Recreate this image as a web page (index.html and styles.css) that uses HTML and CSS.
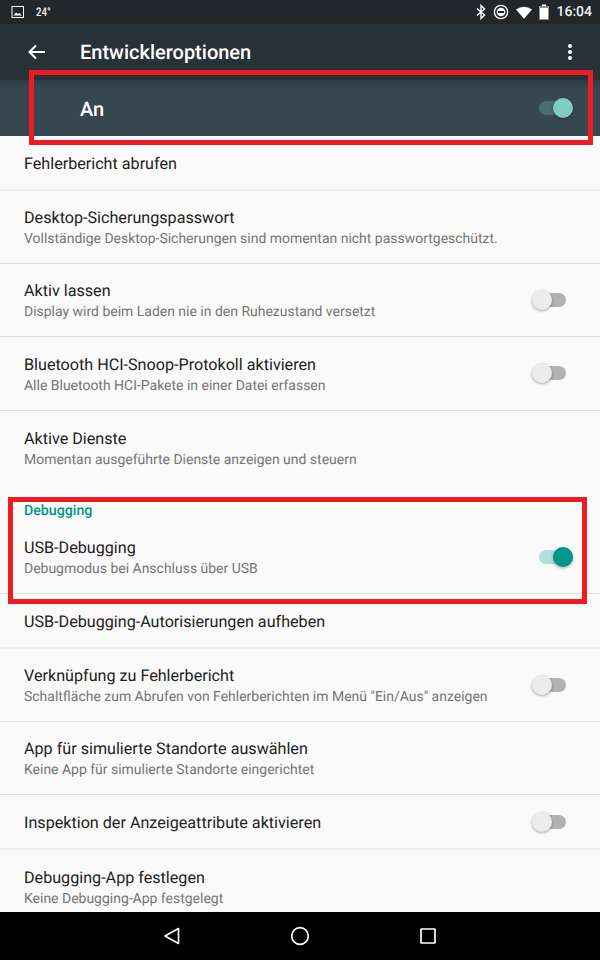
FILE: index.html
```html
<!DOCTYPE html>
<html lang="de">
<head>
    <meta charset="UTF-8">
    <meta name="viewport" content="width=device-width, initial-scale=1.0">
    <title>Entwickleroptionen</title>
    <link rel="stylesheet" href="styles.css">
</head>
<body>
    <div class="screen">
        <div class="status-bar">
            <div class="status-left">
                <svg class="pic-icon" width="14" height="14" viewBox="0 0 14 14"><rect x="1" y="1.5" width="11.5" height="11" fill="none" stroke="#fff" stroke-width="1"/><path d="M2.5 10.5 L5 7.5 L7 9 L8.5 8 L11 10.5 Z" fill="#fff"/></svg>
                <span class="temp">24°</span>
            </div>
            <div class="status-right">
                <svg width="10" height="16" viewBox="0 0 10 16"><path d="M1 4.5 L8.5 11 L5 14.5 V1.5 L8.5 5 L1 11.5" fill="none" stroke="#fff" stroke-width="1.4"/></svg>
                <svg width="16" height="16" viewBox="0 0 16 16"><circle cx="8" cy="8" r="6.6" fill="none" stroke="#fff" stroke-width="1.3"/><circle cx="8" cy="8" r="4.3" fill="#fff"/><rect x="5" y="7" width="6" height="2" fill="#21272b"/></svg>
                <svg width="16" height="13" viewBox="0 0 18 14"><path d="M0 3.6 Q9 -2.4 18 3.6 L9 14 Z" fill="#fff"/></svg>
                <svg width="10" height="16" viewBox="0 0 10 16"><path d="M3 0.5 H7 V2 H9.5 V15.5 H0.5 V2 H3 Z" fill="#fff"/><rect x="0.5" y="2" width="9" height="2" fill="#8b9093"/></svg>
                <span class="clock">16:04</span>
            </div>
        </div>

        <div class="toolbar">
            <svg class="back-icon" width="18" height="16" viewBox="0 0 18 16"><path d="M17 8 H2 M8 1.5 L1.5 8 L8 14.5" fill="none" stroke="#fff" stroke-width="2"/></svg>
            <span class="toolbar-title">Entwickleroptionen</span>
            <div class="more-icon"><i></i><i></i><i></i></div>
        </div>

        <div class="master-bar">
            <span class="master-label">An</span>
            <div class="switch on-dark"><span class="track"></span><span class="thumb"></span></div>
        </div>

        <div class="list">
            <div class="row short"><div class="text"><div class="title">Fehlerbericht abrufen</div></div></div>
            <div class="row">
                <div class="text">
                    <div class="title">Desktop-Sicherungspasswort</div>
                    <div class="sub">Vollständige Desktop-Sicherungen sind momentan nicht passwortgeschützt.</div>
                </div>
            </div>
            <div class="row">
                <div class="text">
                    <div class="title">Aktiv lassen</div>
                    <div class="sub">Display wird beim Laden nie in den Ruhezustand versetzt</div>
                </div>
                <div class="switch"><span class="track"></span><span class="thumb"></span></div>
            </div>
            <div class="row">
                <div class="text">
                    <div class="title">Bluetooth HCI-Snoop-Protokoll aktivieren</div>
                    <div class="sub">Alle Bluetooth HCI-Pakete in einer Datei erfassen</div>
                </div>
                <div class="switch"><span class="track"></span><span class="thumb"></span></div>
            </div>
            <div class="row no-line">
                <div class="text">
                    <div class="title">Aktive Dienste</div>
                    <div class="sub">Momentan ausgeführte Dienste anzeigen und steuern</div>
                </div>
            </div>
            <div class="section-head">Debugging</div>
            <div class="row usb">
                <div class="text">
                    <div class="title">USB-Debugging</div>
                    <div class="sub">Debugmodus bei Anschluss über USB</div>
                </div>
                <div class="switch on"><span class="track"></span><span class="thumb"></span></div>
            </div>
            <div class="row short"><div class="text"><div class="title">USB-Debugging-Autorisierungen aufheben</div></div></div>
            <div class="row">
                <div class="text">
                    <div class="title">Verknüpfung zu Fehlerbericht</div>
                    <div class="sub">Schaltfläche zum Abrufen von Fehlerberichten im Menü "Ein/Aus" anzeigen</div>
                </div>
                <div class="switch"><span class="track"></span><span class="thumb"></span></div>
            </div>
            <div class="row">
                <div class="text">
                    <div class="title">App für simulierte Standorte auswählen</div>
                    <div class="sub">Keine App für simulierte Standorte eingerichtet</div>
                </div>
            </div>
            <div class="row short">
                <div class="text"><div class="title">Inspektion der Anzeigeattribute aktivieren</div></div>
                <div class="switch"><span class="track"></span><span class="thumb"></span></div>
            </div>
            <div class="row no-line">
                <div class="text">
                    <div class="title">Debugging-App festlegen</div>
                    <div class="sub">Keine Debugging-App festgelegt</div>
                </div>
            </div>
        </div>

        <div class="nav-bar">
            <svg width="18" height="18" viewBox="0 0 18 18"><path d="M15.5 1.5 V16.5 L2 9 Z" fill="none" stroke="#fff" stroke-width="1.6" stroke-linejoin="round"/></svg>
            <svg width="20" height="20" viewBox="0 0 20 20"><circle cx="10" cy="10" r="8.3" fill="none" stroke="#fff" stroke-width="1.7"/></svg>
            <svg width="18" height="18" viewBox="0 0 18 18"><rect x="2" y="2" width="14" height="14" rx="0.5" fill="none" stroke="#fff" stroke-width="1.7"/></svg>
        </div>

        <div class="mark mark-top"></div>
        <div class="mark mark-usb"></div>
    </div>
</body>
</html>
```

FILE: styles.css
```css
* {
    box-sizing: border-box;
}
body {
    margin: 0;
    font-family: Roboto, "Liberation Sans", sans-serif;
    background: #fafafa;
    text-rendering: geometricPrecision;
}
.screen {
    position: relative;
    width: 600px;
    height: 960px;
    display: flex;
    flex-direction: column;
    overflow: hidden;
}
.status-bar {
    height: 24px;
    flex: none;
    background: #21272b;
    color: #fff;
    display: flex;
    justify-content: space-between;
    align-items: center;
    padding: 0 8px 0 11px;
}
.status-left,
.status-right {
    display: flex;
    align-items: center;
}
.status-right {
    gap: 7px;
}
.temp {
    font-size: 12px;
    font-weight: 500;
    margin-left: 11px;
    transform: scaleX(0.8);
    transform-origin: left center;
}
.clock {
    font-size: 14px;
    font-weight: 500;
    color: #f2f3f3;
}
.toolbar {
    height: 56px;
    flex: none;
    background: #263238;
    display: flex;
    align-items: center;
    padding: 0 28px 0 28px;
}
.back-icon {
    flex: none;
}
.toolbar-title {
    font-size: 20px;
    font-weight: 500;
    color: #fff;
    margin-left: 34px;
    flex: 1;
}
.more-icon {
    display: flex;
    flex-direction: column;
    gap: 2px;
}
.more-icon i {
    width: 4px;
    height: 4px;
    border-radius: 50%;
    background: #fff;
}
.master-bar {
    height: 56px;
    flex: none;
    background: #37474f;
    background-image: linear-gradient(#2f3d44, #37474f 9px);
    display: flex;
    align-items: center;
    justify-content: space-between;
    padding: 0 34px 0 80px;
}
.master-label {
    font-size: 20px;
    font-weight: 500;
    color: #fff;
    padding-top: 2px;
}
.list {
    flex: 1;
    min-height: 0;
    overflow: hidden;
    background: #fafafa;
}
.row {
    height: 73.5px;
    display: flex;
    align-items: center;
    justify-content: space-between;
    padding: 0 34px 0 24px;
    border-bottom: 1px solid #e0e0e0;
}
.row.short {
    height: 55px;
    border-bottom: 2px solid #eeeeee;
}
.short + .row {
    height: 72.5px;
}
.row.no-line {
    border-bottom: none;
}
.row.usb {
    height: 74px;
}
.text {
    min-width: 0;
    padding-top: 3px;
}
.short .text {
    padding-top: 2px;
}
.title {
    font-size: 16.15px;
    line-height: 21px;
    color: #212121;
}
.sub {
    font-size: 13.97px;
    line-height: 19px;
    margin-top: 2px;
    color: #757575;
}
.section-head {
    height: 36px;
    padding: 19px 24px 0;
    font-size: 14.2px;
    line-height: 17px;
    font-weight: 500;
    color: #009688;
}
.switch {
    position: relative;
    width: 27px;
    height: 22px;
    flex: none;
}
.track {
    position: absolute;
    left: 0;
    top: 4px;
    width: 27px;
    height: 14px;
    border-radius: 7px;
    background: #b2b2b2;
}
.thumb {
    position: absolute;
    left: -7px;
    top: 1px;
    width: 20px;
    height: 20px;
    border-radius: 50%;
    background: #ececec;
    box-shadow: 0 1px 3px rgba(0, 0, 0, 0.35);
}
.switch.on .track {
    background: #b2dfdb;
}
.switch.on .thumb {
    left: auto;
    right: -7px;
    background: #009688;
}
.switch.on-dark .track {
    background: #4d6e6e;
}
.switch.on-dark .thumb {
    left: auto;
    right: -7px;
    background: #80cbc4;
}
.nav-bar {
    height: 48px;
    flex: none;
    background: #000;
    display: flex;
    align-items: center;
    justify-content: space-between;
    padding: 0 163px;
}
.mark {
    position: absolute;
    border: 5px solid #ed1c24;
    pointer-events: none;
}
.mark-top {
    left: 29px;
    top: 70px;
    width: 564px;
    height: 75px;
}
.mark-usb {
    left: 8px;
    top: 497px;
    width: 579px;
    height: 107px;
}
```
